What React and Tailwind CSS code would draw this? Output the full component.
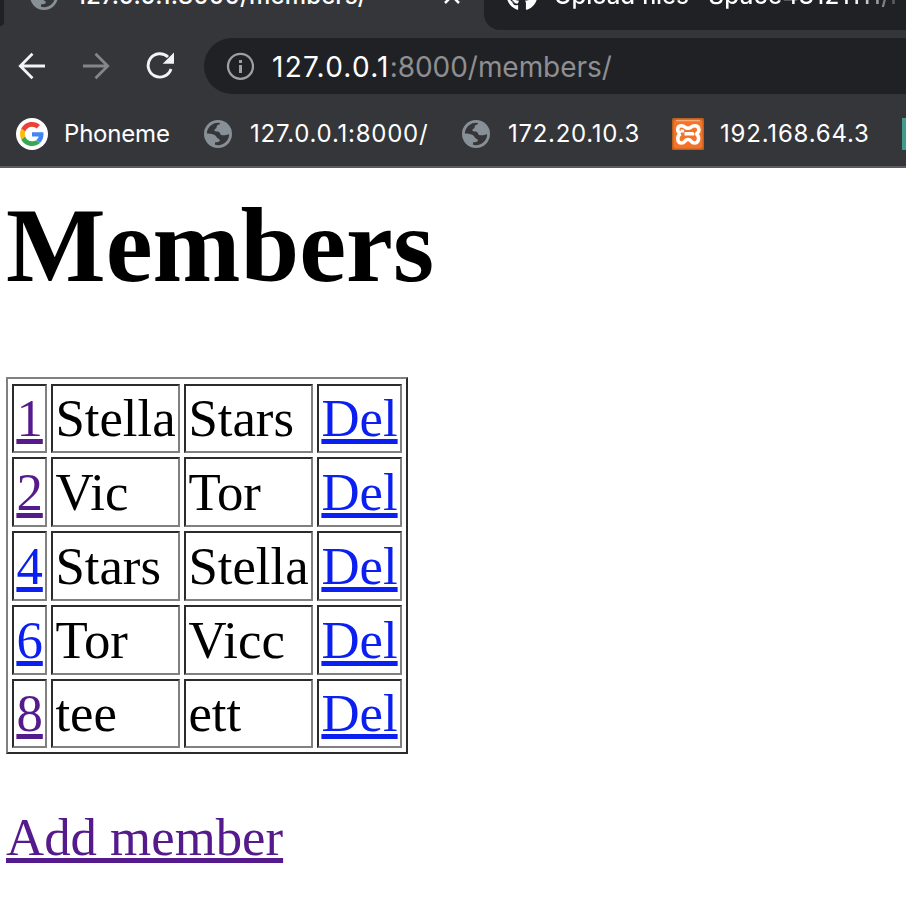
import { FaGithub } from 'react-icons/fa';

const members = [
  ['1', 'Stella', 'Stars', true],
  ['2', 'Vic', 'Tor', true],
  ['4', 'Stars', 'Stella', false],
  ['6', 'Tor', 'Vicc', false],
  ['8', 'tee', 'ett', true],
];

function Globe({ className }) {
  return (
    <svg viewBox="0 0 28 28" className={className}>
      <circle cx="14" cy="14" r="14" fill="#879096" />
      <path
        d="M16 3C16.500 5 12.500 4.500 12.700 6.800C12.900 8.500 10.300 8.500 10.300 10.800C11.500 12 13.500 11 15 12C16.500 13 15.800 15 18 15.200C20.500 15.500 23 14.800 25.200 14.300A11.300 11.300 0 0 1 11 24.800L11 22.300C12.500 22 15.500 22.500 15.800 20.500C16 18.500 13 18.800 12.600 17C11.500 14.500 8 13.800 2.800 13.500A11.300 11.300 0 0 1 16 3Z"
        fill="#35363a"
      />
    </svg>
  );
}

function Google() {
  return (
    <svg viewBox="0 0 32 32" className="size-8 shrink-0">
      <circle cx="16" cy="16" r="16" fill="#fff" />
      <g transform="translate(4 4)">
        <path fill="#4285F4" d="M23.500 12.270c0-.85-.07-1.470-.22-2.120H12v4.250h6.600c-.13 1.060-.85 2.650-2.450 3.720l3.800 2.900c2.300-2.100 3.550-5.160 3.550-8.750z" />
        <path fill="#34A853" d="M12 24c3.240 0 5.960-1.070 7.950-2.910l-3.800-2.930c-1.010.71-2.370 1.200-4.150 1.200-3.170 0-5.860-2.090-6.820-4.980l-3.930 3.040C3.220 21.350 7.270 24 12 24z" />
        <path fill="#FBBC05" d="M5.180 14.380A7.400 7.400 0 0 1 4.780 12c0-.83.15-1.630.38-2.380L1.250 6.580A12 12 0 0 0 0 12c0 1.940.47 3.770 1.250 5.420z" />
        <path fill="#EA4335" d="M12 4.640c2.250 0 3.770.97 4.640 1.780l3.390-3.310C17.950 1.190 15.240 0 12 0 7.270 0 3.220 2.650 1.250 6.580l3.910 3.040C6.140 6.730 8.830 4.640 12 4.640z" />
      </g>
    </svg>
  );
}

function Xampp() {
  return (
    <svg viewBox="0 0 32 32" className="size-8 shrink-0">
      <rect width="32" height="32" rx="1.500" fill="#c0601f" />
      <rect x="1.500" y="2" width="29" height="28.500" rx="2" fill="#f37428" />
      <path d="M4 2.500H28" stroke="#f5a878" strokeWidth="1.500" />
      <path
        d="M12.500 15.800H20.500V17.500M10.500 11.500L10 14.500M8.500 15.500C4.500 13.500 4.700 7.800 9.500 7.800C13.500 7.800 12.500 10.300 16 10.300C19.500 10.300 18.700 7.800 22.500 7.800C28 7.800 28 13.500 24.500 16C28 19 27 25 22.500 25C18.500 25 19.500 21.500 16 21.500C12.500 21.500 13.500 25 9.500 25C5 25 4.500 18.500 8.500 15.500"
        fill="none" stroke="#fff" strokeWidth="3.500" strokeLinejoin="round"
      />
    </svg>
  );
}

function TabStrip() {
  return (
    <div className="flex h-[30px] overflow-hidden bg-[#35363a] text-[24px] leading-[30px] font-medium text-white">
      <div className="h-[26px] w-1 shrink-0 rounded-br-[8px] bg-[#202124]" />
      <div className="flex w-[480px] shrink-0">
        <Globe className="-mt-[18px] ml-[26px] size-7 shrink-0" />
        <span className="-mt-[19px] ml-[18px] w-[346px] shrink-0 tracking-[0.12px] whitespace-nowrap">127.0.0.1:8000/members/</span>
        <svg viewBox="0 0 16 16" className="-mt-3 ml-[22px] size-4 shrink-0">
          <path d="M1 1L15 15M15 1L1 15" stroke="#fff" strokeWidth="2.500" />
        </svg>
      </div>
      <div className="flex grow rounded-bl-[16px] bg-[#202124]">
        <FaGithub className="-mt-[21px] ml-[22px] size-8 shrink-0" />
        <span className="-mt-[19px] ml-4 w-[352px] shrink-0 overflow-hidden bg-linear-to-r from-white from-85% to-[#333] bg-clip-text whitespace-nowrap text-transparent"><span className="tracking-[-0.15px]">Upload files · </span><span className="tracking-[0.4px]">Space48121111/r</span></span>
      </div>
    </div>
  );
}

function Toolbar() {
  return (
    <div className="flex h-[72px] items-center pt-2 pb-2">
      <svg viewBox="0 0 28 28" className="ml-[18px] size-7 shrink-0 fill-none stroke-[#f1f3f4] stroke-[2.8]">
        <path d="M27 14H3M14.500 1.800L2.300 14L14.500 26.200" />
      </svg>
      <svg viewBox="0 0 28 28" className="ml-9 size-7 shrink-0 fill-none stroke-[#85868a] stroke-[2.8]">
        <path d="M1 14H25M13.500 1.800L25.700 14L13.500 26.200" />
      </svg>
      <svg viewBox="0 0 28 28" className="ml-9 size-7 shrink-0">
        <path d="M22 5A11.700 11.700 0 1 0 25 17" fill="none" stroke="#f1f3f4" strokeWidth="2.900" />
        <path d="M28 .5V11.800H16.700Z" fill="#f1f3f4" />
      </svg>
      <div className="ml-[30px] flex h-14 grow items-center rounded-l-full bg-[#202124]">
        <svg viewBox="0 0 28 28" className="ml-[22px] size-7 shrink-0 fill-none stroke-[#9aa0a6]">
          <circle cx="14.500" cy="14.300" r="12.500" strokeWidth="2.300" />
          <path d="M14.500 8V11M14.500 13V21" strokeWidth="3" />
        </svg>
        <span className="ml-[18px] pt-px text-[28px] leading-8 whitespace-nowrap text-[#8e8f92]">
          <span className="tracking-[1.25px] text-white">127.0.0.1</span><span className="tracking-[-0.05px]">:8000/members/</span>
        </span>
      </div>
    </div>
  );
}

function Bookmarks() {
  return (
    <div className="flex h-[66px] items-center overflow-hidden border-b-2 border-[#5b5c60] pl-4 text-[24px] whitespace-nowrap text-white">
      <div className="flex w-[188px] shrink-0 items-center gap-4"><Google /><span className="tracking-[-0.2px]">Phoneme</span></div>
      <div className="flex w-[258px] shrink-0 items-center gap-[18px]"><Globe className="size-7 shrink-0" /><span className="tracking-[0.75px]">127.0.0.1:8000/</span></div>
      <div className="flex w-[210px] shrink-0 items-center gap-[18px]"><Globe className="size-7 shrink-0" /><span className="tracking-[0.7px]">172.20.10.3</span></div>
      <div className="flex w-[230px] shrink-0 items-center gap-4"><Xampp /><span className="tracking-[0.8px]">192.168.64.3</span></div>
      <div className="h-8 w-4 shrink-0 bg-[#45998a]" />
    </div>
  );
}

function Cell({ children, leading }) {
  return (
    <div className={`border-2 border-t-[#2b2b2b] border-r-[#808080] border-b-[#808080] border-l-[#2b2b2b] pl-[2.4px] whitespace-nowrap ${leading}`}>
      {children}
    </div>
  );
}

const link = 'underline decoration-[5px] underline-offset-[3px] [text-decoration-skip-ink:none]';

export default function App() {
  return (
    <div className="h-[910px] w-[906px] overflow-hidden bg-white">
      <header className="h-[168px] bg-[#35363a] font-[Inter,sans-serif]">
        <TabStrip />
        <Toolbar />
        <Bookmarks />
      </header>
      <main className="pl-[6px] font-['Liberation_Serif',serif] text-[52.8px] text-black">
        <h1 className="h-[209px] pt-[17px] text-[105.6px] leading-[122px] font-bold">Members</h1>
        <div className="grid h-[377px] w-[402px] grid-cols-[35px_129px_129px_85px] grid-rows-[69px_70px_70px_70px_69px] gap-1 border-2 border-t-[#808080] border-r-[#2b2b2b] border-b-[#2b2b2b] border-l-[#808080] px-1 pt-[5px]">
          {members.flatMap(([id, first, last, visited], row) => {
            const leading = row > 0 && row < 4 ? 'leading-[66px]' : 'leading-[64px]';
            return [
              <Cell key={id + 'i'} leading={leading}><a className={`${link} ${visited ? 'text-[#551a8b]' : 'text-[#0a1ff0]'}`}>{id}</a></Cell>,
              <Cell key={id + 'f'} leading={leading}>{first}</Cell>,
              <Cell key={id + 'l'} leading={leading}>{last}</Cell>,
              <Cell key={id + 'd'} leading={leading}><a className={`${link} text-[#0a1ff0]`}>Del</a></Cell>,
            ];
          })}
        </div>
        <p className="pt-[53px] leading-[61px]"><a className={`${link} text-[#551a8b]`}>Add member</a></p>
      </main>
    </div>
  );
}
